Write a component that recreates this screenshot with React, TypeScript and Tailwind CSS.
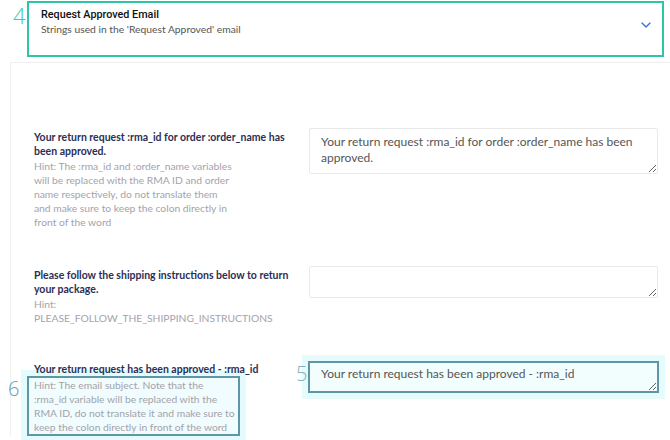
import React from 'react';
import { ChevronDown } from 'lucide-react';

const rows = [
  {
    label: 'Your return request :rma_id for order :order_name has been approved.',
    hint: [
      'Hint: The :rma_id and :order_name variables',
      'will be replaced with the RMA ID and order',
      'name respectively, do not translate them',
      'and make sure to keep the colon directly in',
      'front of the word',
    ],
    value: 'Your return request :rma_id for order :order_name has been approved.',
    tall: true,
  },
  {
    label: 'Please follow the shipping instructions below to return your package.',
    hint: ['Hint:', 'PLEASE_FOLLOW_THE_SHIPPING_INSTRUCTIONS'],
    value: '',
    tall: false,
  },
];

const subjectHint = [
  'Hint: The email subject. Note that the',
  ':rma_id variable will be replaced with the',
  'RMA ID, do not translate it and make sure to',
  'keep the colon directly in front of the word',
];

const font = { fontFamily: 'Lato, "Open Sans", sans-serif' };

function Hint({ lines }: { lines: string[] }) {
  return (
    <div className="text-[10.3px] text-[#a3a3ab] leading-[14px]">
      {lines.map((l, i) => (
        <div key={i} className="whitespace-nowrap">{l}</div>
      ))}
    </div>
  );
}

export default function App() {
  return (
    <div className="w-[670px] h-[440px] bg-white overflow-hidden relative" style={font}>
      {/* Header */}
      <div className="relative pt-px pl-[27px] pr-[6px]">
        <span className="absolute left-[13px] top-[4px] text-[22px] font-light leading-none text-[#3cc9ad]" style={{ fontFamily: '"Open Sans", sans-serif' }}>4</span>
        <div className="h-[56px] border-2 border-[#2ec4a6] flex items-start justify-between pl-[12px] pr-[8px] pt-[4px]">
          <div>
            <div className="text-[10.8px] text-[#111] leading-[15px]" style={{ fontFamily: 'Roboto, sans-serif', fontWeight: 500 }}>Request Approved Email</div>
            <div className="text-[10.3px] text-[#555] leading-[15px]">Strings used in the 'Request Approved' email</div>
          </div>
          <ChevronDown className="mt-[10px] text-[#3b6fd8]" size={16} strokeWidth={2} />
        </div>
      </div>

      {/* Content */}
      <div className="mt-[5px] ml-[10px] border-t border-l border-[#efefef] pt-[65px] pl-[23px] pr-[12px] flex flex-col gap-[37px]">
        {rows.map((r, i) => (
          <div key={i} className="flex">
            <div className="w-[275px] shrink-0">
              <div className="text-[10.5px] font-bold text-[#2c2e55] leading-[14px] pt-[2px] w-[262px]">{r.label}</div>
              <div className="mt-px">
                <Hint lines={r.hint} />
              </div>
            </div>
            <textarea
              defaultValue={r.value}
              className={`w-[350px] ${r.tall ? 'h-[46px]' : 'h-[32px]'} border border-[#e9e9e9] rounded-[2px] px-[11px] py-[5px] text-[12px] leading-[16px] text-[#555] outline-none`}
              style={font}
            />
          </div>
        ))}

        {/* Row 3 with annotations */}
        <div className="flex relative">
          <div className="w-[275px] shrink-0 relative">
            <div className="relative z-10 text-[10.5px] font-bold text-[#2c2e55] leading-[14px]">Your return request has been approved - :rma_id</div>
            <div className="relative -ml-[7px] w-[213px] h-[60px] border-2 border-[#5e96a8] bg-[#f0fcfd] shadow-[0_0_0_6px_#e3fbfc] pl-[5px]">
              <span className="absolute -left-[21px] top-[1px] text-[20px] font-light leading-none text-[#5e9cb3]" style={{ fontFamily: '"Open Sans", sans-serif' }}>6</span>
              <Hint lines={subjectHint} />
            </div>
          </div>
          <div className="relative">
            <span className="absolute -left-[13px] top-[2px] text-[20px] font-light leading-none text-[#7fb0c1]" style={{ fontFamily: '"Open Sans", sans-serif' }}>5</span>
            <textarea
              defaultValue="Your return request has been approved - :rma_id"
              className="w-[351px] h-[32px] border-2 border-[#5e96a8] bg-[#f2fdfd] shadow-[0_0_0_6px_#e6fcfc] px-[11px] py-[3px] text-[12px] leading-[16px] text-[#555] outline-none -ml-px -mt-px"
              style={font}
            />
          </div>
        </div>
      </div>
    </div>
  );
}
